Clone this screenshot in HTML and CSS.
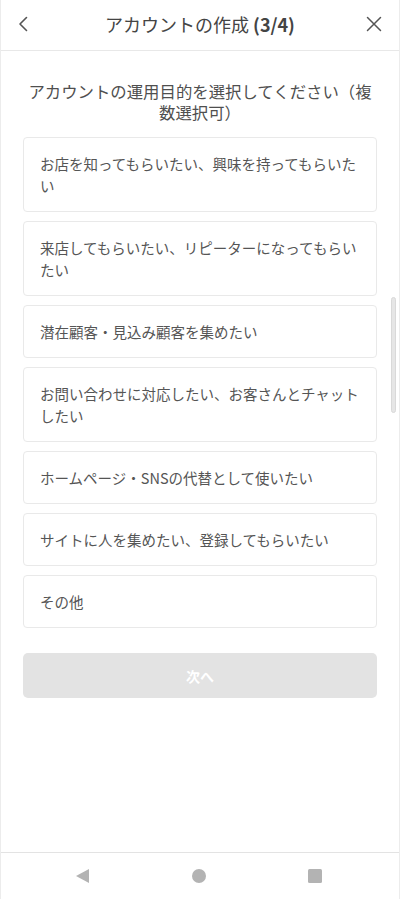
FILE: index.html
```html
<!DOCTYPE html>
<html lang="ja">
<head>
<meta charset="utf-8">
<title>アカウントの作成 (3/4)</title>
<link rel="stylesheet" href="styles.css">
</head>
<body>
<div class="app">
  <header class="topbar">
    <button class="icon-btn back" aria-label="戻る">
      <svg width="10" height="16" viewBox="0 0 10 16"><path d="M8.5 1.5 L2 8 L8.5 14.5" fill="none" stroke="#555" stroke-width="1.6" stroke-linecap="round" stroke-linejoin="round"/></svg>
    </button>
    <h1 class="title">アカウントの作成 <span class="step">(3/4)</span></h1>
    <button class="icon-btn close" aria-label="閉じる">
      <svg width="16" height="16" viewBox="0 0 16 16"><path d="M1.5 1.5 L14.5 14.5 M14.5 1.5 L1.5 14.5" fill="none" stroke="#555" stroke-width="1.5" stroke-linecap="round"/></svg>
    </button>
  </header>

  <main class="content">
    <p class="question">アカウントの運用目的を選択してください（複数選択可）</p>
    <ul class="options">
      <li class="option">お店を知ってもらいたい、興味を持ってもらいたい</li>
      <li class="option">来店してもらいたい、リピーターになってもらいたい</li>
      <li class="option">潜在顧客・見込み顧客を集めたい</li>
      <li class="option">お問い合わせに対応したい、お客さんとチャットしたい</li>
      <li class="option">ホームページ・SNSの代替として使いたい</li>
      <li class="option">サイトに人を集めたい、登録してもらいたい</li>
      <li class="option">その他</li>
    </ul>
    <button class="next" disabled>次へ</button>
  </main>

  <nav class="sysnav">
    <svg width="16" height="16" viewBox="0 0 16 16"><path d="M1 8 L14 1 L14 15 Z" fill="#b3b3b3"/></svg>
    <svg width="16" height="16" viewBox="0 0 16 16"><circle cx="8" cy="8" r="7" fill="#b3b3b3"/></svg>
    <svg width="16" height="16" viewBox="0 0 16 16"><rect x="1" y="1" width="14" height="14" rx="1.5" fill="#b3b3b3"/></svg>
  </nav>

  <div class="scrollbar"></div>
</div>
</body>
</html>
```
FILE: styles.css
```css
* { box-sizing: border-box; }

html, body {
  margin: 0;
  padding: 0;
  background: #fff;
}

body {
  font-family: "Noto Sans CJK JP", "Noto Sans", sans-serif;
  color: #4d4d4d;
}

.app {
  position: relative;
  width: 400px;
  height: 899px;
  display: flex;
  flex-direction: column;
  border-left: 1px solid #ececec;
  border-right: 1px solid #ececec;
  overflow: hidden;
}

.topbar {
  height: 51px;
  flex: none;
  display: grid;
  grid-template-columns: 1fr auto 1fr;
  align-items: center;
  border-bottom: 1px solid #e8e8e8;
}

.icon-btn {
  background: none;
  border: 0;
  padding: 0;
  display: flex;
  align-items: center;
  justify-content: center;
  width: 20px;
  height: 20px;
}

.back {
  justify-self: start;
  margin-left: 12px;
  margin-top: -2px;
}

.close {
  justify-self: end;
  margin-right: 15px;
  margin-top: -2px;
}

.title {
  margin: 0 0 3px;
  font-size: 18px;
  font-weight: 400;
  color: #444;
  line-height: 24px;
  white-space: nowrap;
}

.step {
  font-weight: 600;
}

.content {
  flex: 1;
  padding: 30px 22px 0;
}

.question {
  margin: 0 0 14px;
  font-size: 16.4px;
  line-height: 21px;
  text-align: center;
  color: #4f4f4f;
}

.options {
  list-style: none;
  margin: 0;
  padding: 0;
  display: flex;
  flex-direction: column;
  gap: 9px;
}

.option {
  border: 1px solid #e9e9e9;
  border-radius: 4px;
  padding: 14.5px 15px 14.5px 16px;
  font-size: 14.5px;
  line-height: 22px;
  color: #555;
  background: #fff;
}

.next {
  display: block;
  width: 100%;
  height: 45px;
  margin-top: 25px;
  border: 0;
  border-radius: 5px;
  background: #e3e3e3;
  color: #fff;
  font-family: "Noto Sans CJK JP", "Noto Sans", sans-serif;
  font-size: 14px;
  font-weight: 700;
}

.sysnav {
  flex: none;
  height: 47px;
  border-top: 1px solid #e3e3e3;
  display: flex;
  align-items: center;
  justify-content: space-between;
  padding: 0 76px 0 74px;
}

.scrollbar {
  position: absolute;
  right: 3px;
  top: 297px;
  width: 5px;
  height: 116px;
  border-radius: 3px;
  background: #e6e6e6;
  border: 1px solid #d9d9d9;
}
```
